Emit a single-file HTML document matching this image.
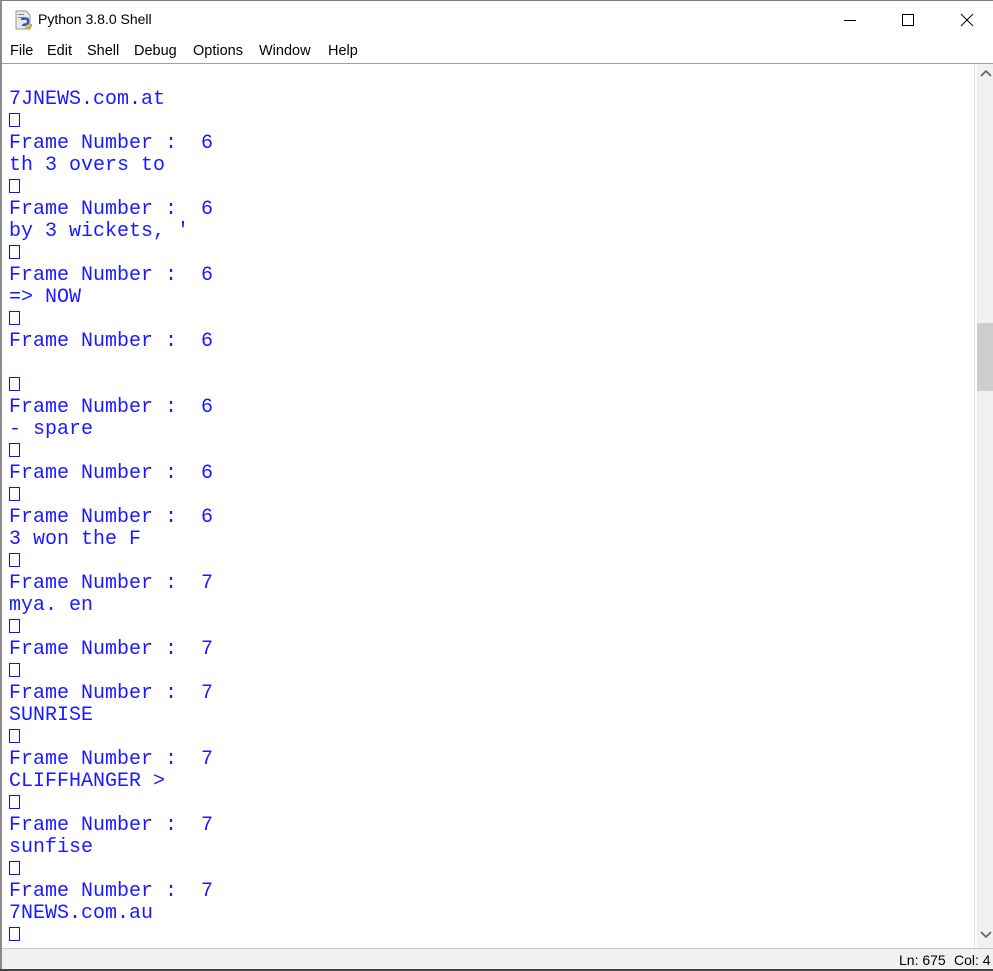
<!DOCTYPE html>
<html><head><meta charset="utf-8">
<style>
*{margin:0;padding:0;box-sizing:border-box}
html,body{width:993px;height:971px;overflow:hidden;background:#fff;font-family:"Liberation Sans",sans-serif}
#win{position:absolute;left:0;top:0;width:993px;height:971px;border-top:1px solid #7a7a7a;border-left:2px solid #8a8a8a}
#title{position:absolute;left:0;top:0;width:993px;height:38px;background:#fff}
#title .t{position:absolute;left:36px;top:10px;font-size:14px;color:#000}
#menu{position:absolute;left:0;top:38px;width:993px;height:25px;background:#fff;border-bottom:1px solid #a0a0a0;font-size:14.5px}
#menu span{position:absolute;top:4px}
#text{position:absolute;left:0;top:63px;width:973px;height:884px;background:#fff;border-right:1px solid #e0e0e0}
.l{position:absolute;left:9px;height:22px;line-height:22px;font-family:"Liberation Mono",monospace;font-size:20px;color:#1a1aff;white-space:pre}
.b{display:inline-block;width:11px;height:14px;border:1px solid #1010ff;vertical-align:-1px}
#sb{position:absolute;left:975px;top:63px;width:18px;height:884px;background:#f0f0f0}
#thumb{position:absolute;left:975px;top:322px;width:18px;height:68px;background:#cdcdcd}
#status{position:absolute;left:0;top:947px;width:993px;height:22px;background:#f0f0f0;border-top:1px solid #c8c8c8;font-size:14px}
#bot{position:absolute;left:0;top:969px;width:993px;height:2px;background:#444}
#lines{position:absolute;left:0;top:2px}
</style></head><body>
<div id="win">
<div id="title">
<svg style="position:absolute;left:12px;top:9px" width="20" height="20" viewBox="0 0 20 20">
<path d="M2 1h10l4 4v14H2z" fill="#e8e8e8" stroke="#999"/>
<rect x="4" y="4" width="6" height="1" fill="#888"/><rect x="4" y="7" width="6" height="1" fill="#888"/>
<path d="M8 10c0-2 6-2 6 0v3c0 2-5 1-5 3" stroke="#2a5cab" stroke-width="2.5" fill="none"/>
<path d="M11 18c4 0 6-1 6-4" stroke="#c9a92a" stroke-width="2.5" fill="none"/>
</svg>
<span class="t">Python 3.8.0 Shell</span>
<svg style="position:absolute;left:840px;top:12px" width="140" height="16">
<line x1="2" y1="7.5" x2="14" y2="7.5" stroke="#000"/>
<rect x="60.5" y="1.5" width="11" height="11" fill="none" stroke="#000"/>
<path d="M119 1l12 12M131 1l-12 12" stroke="#000"/>
</svg>
</div>
<div id="menu">
<span style="left:8px">File</span><span style="left:45px">Edit</span><span style="left:85px">Shell</span><span style="left:132px">Debug</span><span style="left:191px">Options</span><span style="left:257px">Window</span><span style="left:326px">Help</span>
</div>
<div id="text"></div>
<div id="sb"></div><div id="thumb"></div>
<svg style="position:absolute;left:977px;top:68px" width="14" height="10"><path d="M2 7l5-5 5 5" stroke="#606060" stroke-width="1.6" fill="none"/></svg>
<svg style="position:absolute;left:977px;top:929px" width="14" height="10"><path d="M2 2l5 5 5-5" stroke="#606060" stroke-width="1.6" fill="none"/></svg>
<div id="status"><span style="position:absolute;left:897px;top:3px">Ln: 675</span><span style="position:absolute;left:952px;top:3px">Col: 4</span></div>
</div>
<div id="bot"></div>
<div id="lines">
<div class="l" style="top:87px">7JNEWS.com.at</div>
<div class="l" style="top:109px"><span class="b"></span></div>
<div class="l" style="top:131px">Frame Number :  6</div>
<div class="l" style="top:153px">th 3 overs to</div>
<div class="l" style="top:175px"><span class="b"></span></div>
<div class="l" style="top:197px">Frame Number :  6</div>
<div class="l" style="top:219px">by 3 wickets, '</div>
<div class="l" style="top:241px"><span class="b"></span></div>
<div class="l" style="top:263px">Frame Number :  6</div>
<div class="l" style="top:285px">=&gt; NOW</div>
<div class="l" style="top:307px"><span class="b"></span></div>
<div class="l" style="top:329px">Frame Number :  6</div>
<div class="l" style="top:373px"><span class="b"></span></div>
<div class="l" style="top:395px">Frame Number :  6</div>
<div class="l" style="top:417px">- spare</div>
<div class="l" style="top:439px"><span class="b"></span></div>
<div class="l" style="top:461px">Frame Number :  6</div>
<div class="l" style="top:483px"><span class="b"></span></div>
<div class="l" style="top:505px">Frame Number :  6</div>
<div class="l" style="top:527px">3 won the F</div>
<div class="l" style="top:549px"><span class="b"></span></div>
<div class="l" style="top:571px">Frame Number :  7</div>
<div class="l" style="top:593px">mya. en</div>
<div class="l" style="top:615px"><span class="b"></span></div>
<div class="l" style="top:637px">Frame Number :  7</div>
<div class="l" style="top:659px"><span class="b"></span></div>
<div class="l" style="top:681px">Frame Number :  7</div>
<div class="l" style="top:703px">SUNRISE</div>
<div class="l" style="top:725px"><span class="b"></span></div>
<div class="l" style="top:747px">Frame Number :  7</div>
<div class="l" style="top:769px">CLIFFHANGER &gt;</div>
<div class="l" style="top:791px"><span class="b"></span></div>
<div class="l" style="top:813px">Frame Number :  7</div>
<div class="l" style="top:835px">sunfise</div>
<div class="l" style="top:857px"><span class="b"></span></div>
<div class="l" style="top:879px">Frame Number :  7</div>
<div class="l" style="top:901px">7NEWS.com.au</div>
<div class="l" style="top:923px"><span class="b"></span></div>
</div>
</body></html>
